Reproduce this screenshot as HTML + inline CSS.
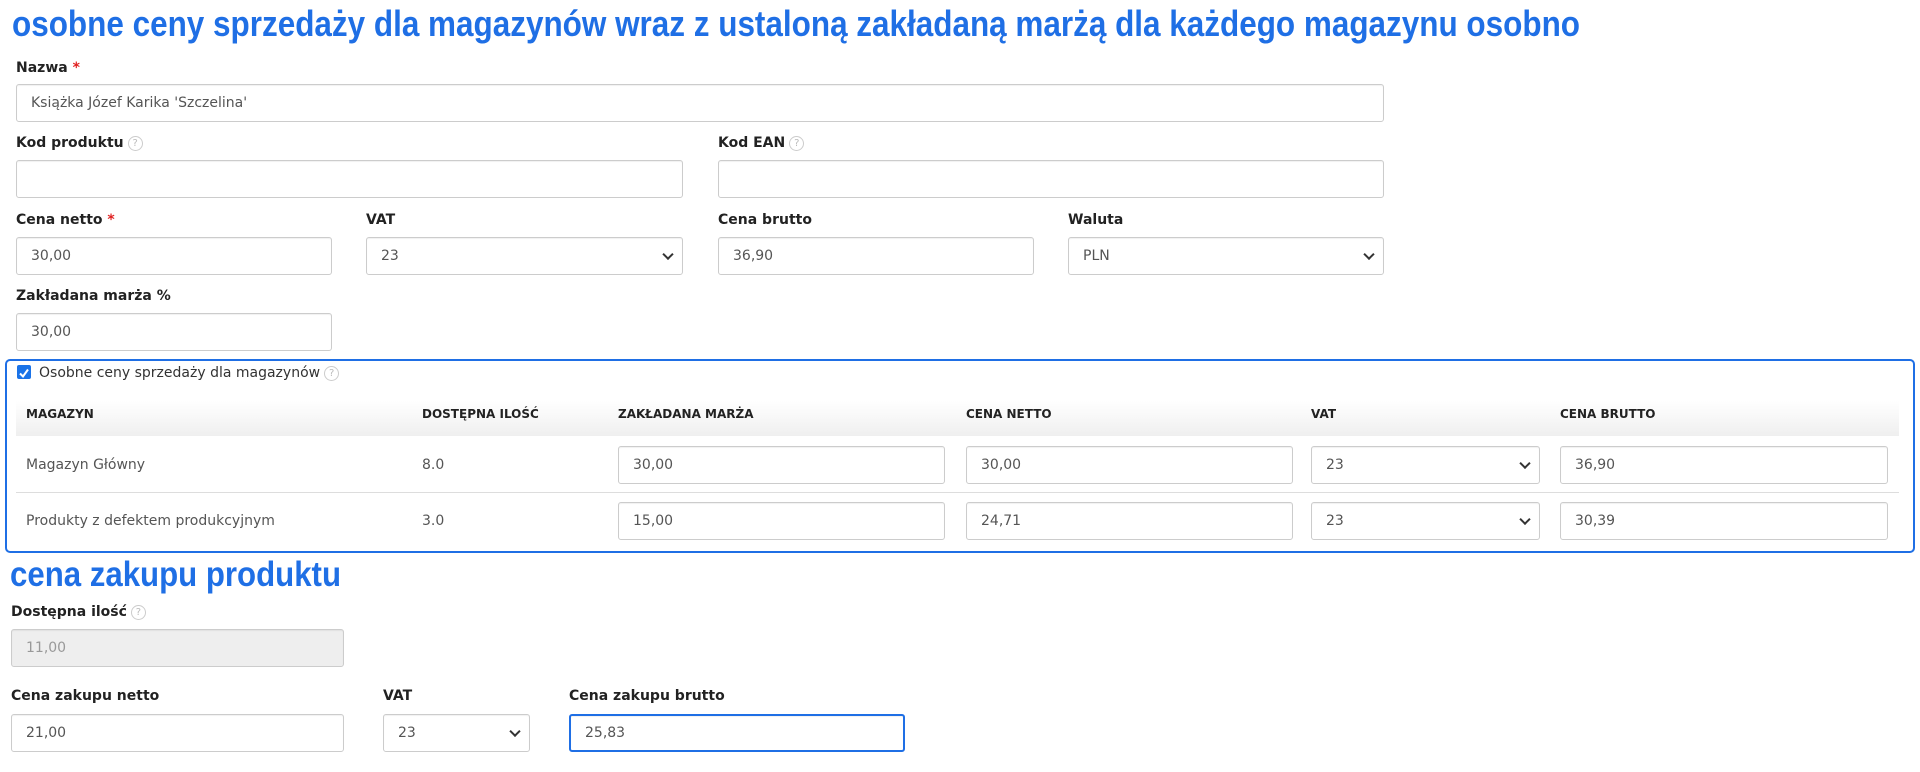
<!DOCTYPE html>
<html><head><meta charset="utf-8">
<style>
*{box-sizing:border-box;margin:0;padding:0}
body{width:1920px;height:772px;background:#fff;position:relative;overflow:hidden;font-family:"DejaVu Sans","Liberation Sans",sans-serif;color:#222}
.abs{position:absolute}
.lbl{position:absolute;font-weight:bold;font-size:14px;color:#222;white-space:nowrap;transform:translateY(-50%)}
.lbl .req{color:#e02020}
.q{display:inline-block;width:15px;height:15px;border:1px solid #ccc;border-radius:50%;font-size:10px;color:#bbb;text-align:center;line-height:13px;font-weight:normal;vertical-align:middle;margin-left:4px}
.inp{position:absolute;border:1px solid #ccc;border-radius:3px;background:#fff;font-size:14px;color:#555;padding-left:14px;display:flex;align-items:center;box-shadow:inset 0 1px 1px rgba(0,0,0,.06)}
.sel::after{content:"";position:absolute;right:10px;top:50%;width:6px;height:6px;border-right:2px solid #333;border-bottom:2px solid #333;transform:translateY(-70%) rotate(45deg)}
.th{position:absolute;font-size:12px;font-weight:bold;color:#222;top:414px;transform:translateY(-50%);white-space:nowrap}
.td{position:absolute;font-size:14px;color:#555;transform:translateY(-50%);white-space:nowrap}
</style></head><body>
<svg class="abs" style="left:0;top:0" width="1920" height="50"><text x="12" y="36" font-family="Liberation Sans, sans-serif" font-weight="bold" font-size="36" fill="#1f6fe5" textLength="1568" lengthAdjust="spacingAndGlyphs">osobne ceny sprzedaży dla magazynów wraz z ustaloną zakładaną marżą dla każdego magazynu osobno</text></svg>

<div class="lbl" style="left:16px;top:68px">Nazwa <span class="req">*</span></div>
<div class="inp" style="left:16px;top:84px;width:1368px;height:38px">Książka Józef Karika 'Szczelina'</div>

<div class="lbl" style="left:16px;top:143px">Kod produktu<span class="q">?</span></div>
<div class="inp" style="left:16px;top:160px;width:667px;height:38px"></div>
<div class="lbl" style="left:718px;top:143px">Kod EAN<span class="q">?</span></div>
<div class="inp" style="left:718px;top:160px;width:666px;height:38px"></div>

<div class="lbl" style="left:16px;top:220px">Cena netto <span class="req">*</span></div>
<div class="inp" style="left:16px;top:237px;width:316px;height:38px">30,00</div>
<div class="lbl" style="left:366px;top:220px">VAT</div>
<div class="inp sel" style="left:366px;top:237px;width:317px;height:38px">23</div>
<div class="lbl" style="left:718px;top:220px">Cena brutto</div>
<div class="inp" style="left:718px;top:237px;width:316px;height:38px">36,90</div>
<div class="lbl" style="left:1068px;top:220px">Waluta</div>
<div class="inp sel" style="left:1068px;top:237px;width:316px;height:38px">PLN</div>

<div class="lbl" style="left:16px;top:296px">Zakładana marża %</div>
<div class="inp" style="left:16px;top:313px;width:316px;height:38px">30,00</div>

<div class="abs" style="left:5px;top:359px;width:1910px;height:194px;border:2px solid #1f6fe5;border-radius:5px"></div>
<div class="abs" style="left:17px;top:365px;width:14px;height:14px;background:#1a73e8;border-radius:2px"><svg width="14" height="14"><path d="M3 7.5 L6 10.5 L11 3.5" stroke="#fff" stroke-width="2" fill="none"/></svg></div>
<div class="td" style="left:39px;top:373px;color:#333">Osobne ceny sprzedaży dla magazynów<span class="q">?</span></div>

<div class="abs" style="left:16px;top:401px;width:1883px;height:35px;background:linear-gradient(#fff,#efefef)"></div>
<div class="th" style="left:26px">MAGAZYN</div>
<div class="th" style="left:422px">DOSTĘPNA ILOŚĆ</div>
<div class="th" style="left:618px">ZAKŁADANA MARŻA</div>
<div class="th" style="left:966px">CENA NETTO</div>
<div class="th" style="left:1311px">VAT</div>
<div class="th" style="left:1560px">CENA BRUTTO</div>

<div class="td" style="left:26px;top:465px">Magazyn Główny</div>
<div class="td" style="left:422px;top:465px">8.0</div>
<div class="inp" style="left:618px;top:446px;width:327px;height:38px">30,00</div>
<div class="inp" style="left:966px;top:446px;width:327px;height:38px">30,00</div>
<div class="inp sel" style="left:1311px;top:446px;width:229px;height:38px">23</div>
<div class="inp" style="left:1560px;top:446px;width:328px;height:38px">36,90</div>
<div class="abs" style="left:16px;top:492px;width:1883px;height:1px;background:#ddd"></div>
<div class="td" style="left:26px;top:521px">Produkty z defektem produkcyjnym</div>
<div class="td" style="left:422px;top:521px">3.0</div>
<div class="inp" style="left:618px;top:502px;width:327px;height:38px">15,00</div>
<div class="inp" style="left:966px;top:502px;width:327px;height:38px">24,71</div>
<div class="inp sel" style="left:1311px;top:502px;width:229px;height:38px">23</div>
<div class="inp" style="left:1560px;top:502px;width:328px;height:38px">30,39</div>

<svg class="abs" style="left:0;top:552px" width="400" height="50"><text x="10" y="34" font-family="Liberation Sans, sans-serif" font-weight="bold" font-size="35" fill="#1f6fe5" textLength="331" lengthAdjust="spacingAndGlyphs">cena zakupu produktu</text></svg>

<div class="lbl" style="left:11px;top:612px">Dostępna ilość<span class="q">?</span></div>
<div class="inp" style="left:11px;top:629px;width:333px;height:38px;background:#eee;color:#999">11,00</div>

<div class="lbl" style="left:11px;top:696px">Cena zakupu netto</div>
<div class="inp" style="left:11px;top:714px;width:333px;height:38px">21,00</div>
<div class="lbl" style="left:383px;top:696px">VAT</div>
<div class="inp sel" style="left:383px;top:714px;width:147px;height:38px">23</div>
<div class="lbl" style="left:569px;top:696px">Cena zakupu brutto</div>
<div class="inp" style="left:569px;top:714px;width:336px;height:38px;border:2px solid #1f6fe5">25,83</div>
</body></html>
